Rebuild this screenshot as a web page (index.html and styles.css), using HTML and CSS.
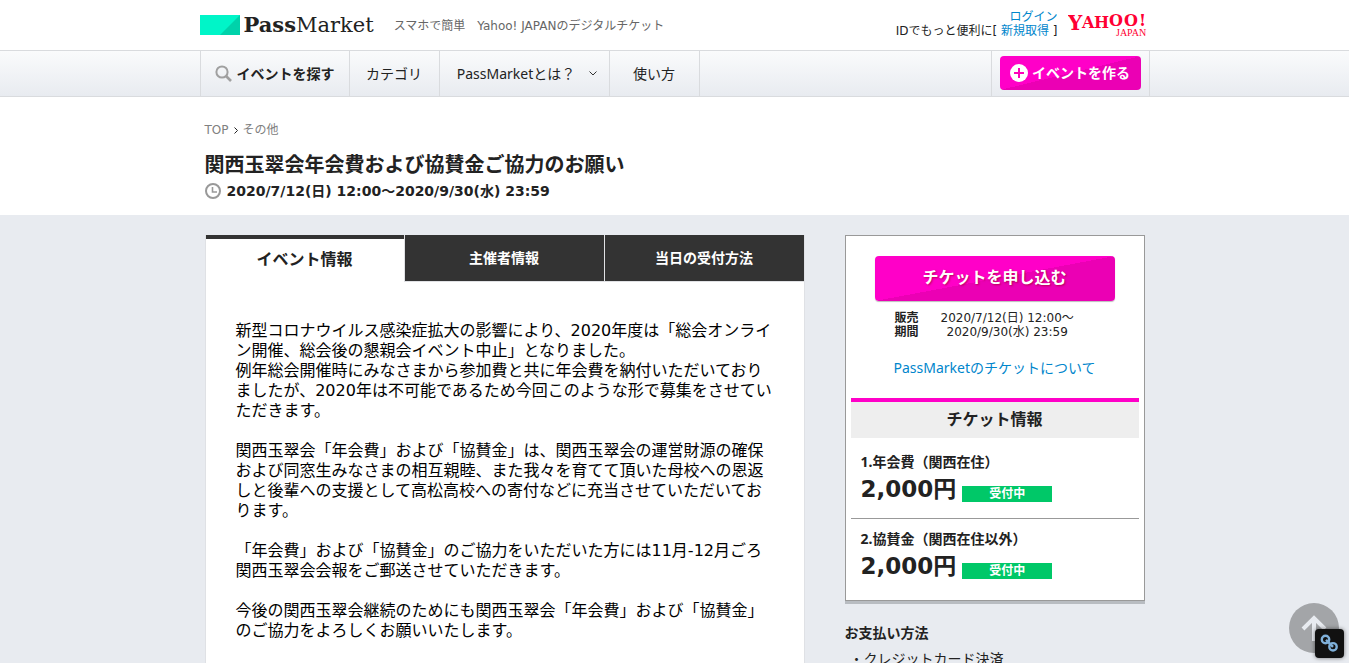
FILE: index.html
```html
<!DOCTYPE html>
<html lang="ja">
<head>
<meta charset="utf-8">
<title>関西玉翠会年会費および協賛金ご協力のお願い - PassMarket</title>
<link rel="stylesheet" href="styles.css">
</head>
<body>
<header class="masthead wrap">
  <a class="logo" href="#">
    <svg class="logo-mark" width="40" height="20" viewBox="0 0 40 20" aria-hidden="true"><path fill="#00f5c8" d="M0 0h40v20H0z"/><path fill="#00d2aa" d="M40 0v20H20z"/></svg>
    <span class="logo-name"><b>Pass</b>Market</span>
  </a>
  <p class="tagline">スマホで簡単　Yahoo! JAPANのデジタルチケット</p>
  <div class="account">
    <a href="#">ログイン</a>
    <div>IDでもっと便利に[ <a href="#">新規取得</a> ]</div>
  </div>
  <a class="yahoo" href="#" aria-label="Yahoo! JAPAN">
    <svg width="82" height="28" viewBox="0 0 82 28" fill="#ff0033"><text class="yahoo-name" x="0 14 26 41 56 71" y="19 17 17 15 15 15"><tspan class="yahoo-first">Y</tspan>AHOO!</text><text class="yahoo-country" x="48" y="25">JAPAN</text></svg>
  </a>
</header>

<nav class="nav">
  <div class="wrap nav-row">
    <a class="nav-item nav-search" href="#"><svg width="17" height="17" viewBox="0 0 17 17" fill="none" stroke="#a0a0a0" stroke-width="2"><circle cx="7" cy="7" r="5.6"/><path stroke-width="2.6" d="M11 11l5 5"/></svg>イベントを探す</a>
    <a class="nav-item nav-category" href="#">カテゴリ</a>
    <a class="nav-item nav-about" href="#">PassMarketとは？<svg width="8" height="5" viewBox="0 0 8 5" fill="none" stroke="#333"><path d="M.5.5L4 4 7.5.5"/></svg></a>
    <a class="nav-item nav-usage" href="#">使い方</a>
    <div class="nav-create"><button class="pink create" type="button"><svg width="18" height="18" viewBox="0 0 18 18"><circle cx="9" cy="9" r="9" fill="#fff"/><path d="M9 4v10M4 9h10" stroke="#f0b" stroke-width="2"/></svg>イベントを作る</button></div>
  </div>
</nav>

<section class="intro wrap">
  <div class="crumbs"><a href="#">TOP</a><svg width="4" height="7" viewBox="0 0 4 7" fill="none" stroke="#222"><path d="M.5.5l3 3-3 3"/></svg><a href="#">その他</a></div>
  <h1>関西玉翠会年会費および協賛金ご協力のお願い</h1>
  <p class="when"><svg width="16" height="16" viewBox="0 0 16 16" fill="none" stroke="#999" stroke-width="2"><circle cx="8" cy="8" r="7"/><path stroke-width="1.6" d="M7.500 4v5H12"/></svg>2020/7/12(日) 12:00～2020/9/30(水) 23:59</p>
</section>

<main class="content">
  <div class="wrap columns">
    <article class="panel">
      <div class="tabs" role="tablist">
        <button class="tab tab-on" role="tab" aria-selected="true">イベント情報</button>
        <button class="tab" role="tab">主催者情報</button>
        <button class="tab" role="tab">当日の受付方法</button>
      </div>
      <div class="body">
        <p>新型コロナウイルス感染症拡大の影響により、2020年度は「総会オンライ<br>ン開催、総会後の懇親会イベント中止」となりました。<br>例年総会開催時にみなさまから参加費と共に年会費を納付いただいており<br>ましたが、2020年は不可能であるため今回このような形で募集をさせてい<br>ただきます。</p>
        <p>関西玉翠会「年会費」および「協賛金」は、関西玉翠会の運営財源の確保<br>および同窓生みなさまの相互親睦、また我々を育てて頂いた母校への恩返<br>しと後輩への支援として高松高校への寄付などに充当させていただいてお<br>ります。</p>
        <p>「年会費」および「協賛金」のご協力をいただいた方には11月-12月ごろ<br>関西玉翠会会報をご郵送させていただきます。</p>
        <p>今後の関西玉翠会継続のためにも関西玉翠会「年会費」および「協賛金」<br>のご協力をよろしくお願いいたします。</p>
      </div>
    </article>
    <aside class="side">
      <div class="card">
        <button class="pink apply" type="button">チケットを申し込む</button>
        <dl class="sale"><dt>販売<br>期間</dt><dd>2020/7/12(日) 12:00～<br>2020/9/30(水) 23:59</dd></dl>
        <a class="about-ticket" href="#">PassMarketのチケットについて</a>
        <h2>チケット情報</h2>
        <ul class="tickets">
          <li><h3>1.年会費（関西在住）</h3><div class="price-row"><span class="price">2,000円</span><span class="status">受付中</span></div></li>
          <li><h3>2.協賛金（関西在住以外）</h3><div class="price-row"><span class="price">2,000円</span><span class="status">受付中</span></div></li>
        </ul>
      </div>
      <h4>お支払い方法</h4>
      <ul class="payments"><li>・クレジットカード決済</li></ul>
    </aside>
  </div>
</main>

<button class="to-top" type="button" aria-label="ページの先頭へ"><svg width="50" height="50" viewBox="0 0 50 50" fill="none" stroke="#e8ebf0" stroke-width="4"><path d="M25 38V15M14 26l11-11 11 11"/></svg></button>
<button class="link-badge" type="button" aria-label="リンク"><svg width="29" height="29" viewBox="0 0 29 29" fill="none" stroke="#7fb0da" stroke-width="2.400"><circle cx="10.500" cy="10.500" r="3.700"/><circle cx="18" cy="17.800" r="3.700"/><path d="M11 10.800l7 7"/></svg></button>
</body>
</html>
```
FILE: styles.css
```css
* { box-sizing: border-box; }
body {
  margin: 0;
  color: #222;
  background: #fff;
  font: 12px/14px "DejaVu Sans", "Noto Sans CJK JP", sans-serif;
}
html { scrollbar-width: none; }
h1, h2, h3, h4, p, ul, dl, dd { margin: 0; padding: 0; }
ul { list-style: none; }
a { color: #0086cc; text-decoration: none; }
button { border: 0; padding: 0; color: inherit; font: inherit; cursor: pointer; }
svg { flex: none; }
.wrap { width: 100%; max-width: 950px; margin: 0 auto; }

.masthead { display: flex; align-items: center; height: 50px; }
.logo { display: flex; align-items: center; gap: 4px; color: #222; }
.logo-name { font: 21px/24px "DejaVu Serif", serif; }
.tagline { margin-left: 20px; padding-top: 2px; color: #666; }
.account { margin-left: auto; padding-bottom: 2px; text-align: right; }
.yahoo { display: flex; margin-left: 10px; }
.yahoo-name { font: bold 16px "DejaVu Serif", serif; }
.yahoo-first { font-size: 20px; }
.yahoo-country { font: 10px "Liberation Serif", serif; }

.nav {
  border: solid #d9dbde;
  border-width: 1px 0;
  background: linear-gradient(#fafbfc, #e8ebf0);
}
.nav-row { display: flex; height: 45px; border: solid #d9dbde; border-width: 0 1px; }
.nav-item {
  display: flex;
  align-items: center;
  justify-content: center;
  border-right: 1px solid #d9dbde;
  color: #222;
  font: 14px/20px "Noto Sans", "Noto Sans CJK JP", sans-serif;
}
.nav-search { width: 149px; gap: 5px; font-weight: bold; }
.nav-category, .nav-usage { width: 90px; }
.nav-about { width: 170px; padding-left: 6px; gap: 14px; }
.nav-create { display: flex; align-items: center; margin-left: auto; padding: 0 8px 2px; border-left: 1px solid #d9dbde; }
.pink {
  border-radius: 4px;
  color: #fff;
  background: linear-gradient(to bottom right, #ff00c8 50%, #eb00b4 50%);
  font-weight: bold;
}
.create { display: flex; align-items: center; justify-content: center; gap: 4px; width: 141px; height: 34px; font-size: 14px; }

.intro { padding: 24px 5px 14px; }
.crumbs { display: flex; align-items: center; gap: 5px; height: 18px; }
.crumbs a { color: #808080; }
h1 { margin-top: 11px; font-size: 20px; line-height: 30px; }
.when { display: flex; align-items: center; gap: 6px; font-size: 14px; line-height: 20px; font-weight: bold; margin-top: 1px; }

.content { min-height: calc(100vh - 215px); background: #e8ebf0; }
.columns { display: flex; align-items: flex-start; justify-content: space-between; padding: 20px 5px 0; }
.panel { width: 600px; border: solid #dfe1e5; border-width: 0 1px; background: #fff; }
.tabs { display: grid; grid-template-columns: 198px 1fr 1fr; gap: 1px; height: 47px; background: #e0e1e4; }
.tab { margin-bottom: 1px; color: #fff; background: #333; font-size: 14px; font-weight: bold; }
.tab-on { margin: 0; border-top: 4px solid #333; padding-bottom: 2px; color: #222; background: #fff; font-size: 16px; }
.body { padding: 39px 28px 39px 30px; color: #000; font-size: 16px; line-height: 20px; white-space: nowrap; }
.body p + p { margin-top: 20px; }

.side { width: 300px; }
.card { border: 1px solid #999; padding: 20px 5px 4px; background: #fff; box-shadow: 0 3px 0 #b8bcc1; }
.apply { display: block; width: 240px; height: 45px; margin: 0 auto; padding-bottom: 2px; font-size: 16px; text-shadow: 1px 1px 2px #8008; box-shadow: 0 1px 1px #0004; }
.sale { display: flex; gap: 22px; margin-top: 10px; padding-left: 44px; text-align: center; }
.sale dt { font-weight: bold; }
.about-ticket { display: block; margin-top: 19px; text-align: center; font: 14px/20px "Noto Sans", "Noto Sans CJK JP", sans-serif; }
h2 { margin-top: 20px; border-top: 4px solid #ff00c8; background: #eee; text-align: center; font-size: 16px; line-height: 36px; }
.tickets li { height: 77px; padding: 14px 10px; }
.tickets li:first-child { height: 81px; border-bottom: 1px solid #999; }
.tickets li:last-child { padding-top: 10px; }
h3 { font: bold 14px/20px "Noto Sans", "Noto Sans CJK JP", sans-serif; }
.price-row { display: flex; align-items: flex-end; gap: 6px; }
.price { font: bold 23px/34px "DejaVu Sans", "Noto Sans CJK JP", sans-serif; }
.status { width: 90px; margin-bottom: 4px; color: #fff; background: #00c868; text-align: center; font-weight: bold; line-height: 16px; }
h4 { margin-top: 22px; font-size: 14px; line-height: 20px; }
.payments { margin-top: 6px; padding-left: 5px; font-size: 14px; line-height: 20px; }

.to-top { position: fixed; right: 10px; bottom: 10px; width: 50px; height: 50px; border-radius: 50%; background: #a3a5a8; }
.link-badge { position: fixed; right: 5px; bottom: 5px; width: 29px; height: 29px; border-radius: 4px; background: #111; box-shadow: 0 0 4px #0008; }
.to-top svg, .link-badge svg { display: block; }
```
